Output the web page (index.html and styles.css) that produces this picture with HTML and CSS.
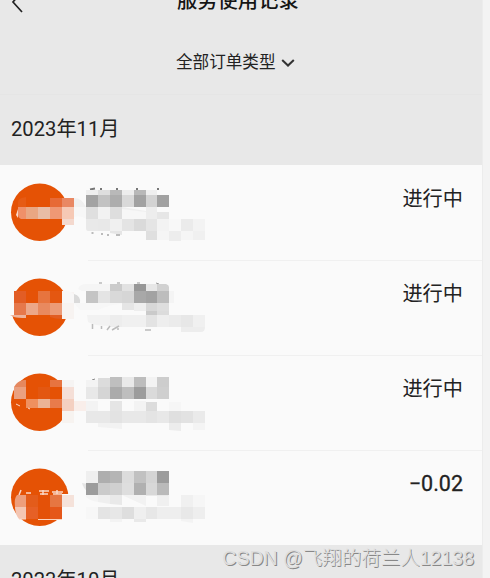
FILE: index.html
```html
<!DOCTYPE html>
<html lang="zh-CN">
<head>
<meta charset="utf-8">
<title>服务使用记录</title>
<link rel="stylesheet" href="styles.css">
</head>
<body>
<main class="screen">
  <header class="header">
    <svg class="back" width="14" height="24" viewBox="0 0 14 24"><path d="M10.5 3 2 13l9 10" /></svg>
    <h1 class="title">服务使用记录</h1>
  </header>
  <div class="filter">
    <span>全部订单类型</span>
    <svg class="chevron" width="14" height="10" viewBox="0 0 14 10"><path d="m1.2 2 5.800 5.500 5.800-5.500" /></svg>
  </div>
  <h2 class="month">2023年11月</h2>
  <ul class="records">
    <li class="record">
      <svg class="summary" width="220" height="90" viewBox="0 0 220 90">
        <circle cx="39.7" cy="42.2" r="28.7" fill="#e55205"/>
        <path d="M18 37v-5q0-4 8-5v10z" fill="#e65b14"/><path d="M16 45l2-6v9z" fill="#fbd9c9"/>
        <path d="M18 37h8v12h-5q-3-1-3-5z" fill="#ef9069"/>
        <path d="M26 37h12v12H26z" fill="#e9a783"/><path d="M38 37h12v12H38z" fill="#e8bda6"/>
        <path d="M50 28h12v9H50z" fill="#e76a36"/><path d="M50 37h12v12H50z" fill="#ef9875"/>
        <path d="M62 28h12v9H62z" fill="#e98863"/><path d="M62 37h12v12H62z" fill="#f6c9b5"/><path d="M62 49h12v6H62z" fill="#f4d9ce"/>
        <path d="M74 28q8 0 12 9H74z" fill="#f0f0f0"/><path d="M74 37h12v12q-5-4-12-2z" fill="#f7f7f7"/>
        <path d="M90 19.5l5-1M100 19h2M116 19h2M136 19h2M157 19h2" stroke="#777" stroke-width="1.800"/>
        <path d="M86 20h12v5H86z" fill="#efefef"/><path d="M98 20h12v5H98z" fill="#dedede"/><path d="M110 20h12v5h-12z" fill="#b9b9b9"/><path d="M122 20h12v5h-12z" fill="#ededed"/><path d="M134 20h12v5h-12z" fill="#b8b8b8"/><path d="M146 20h11v5h-11z" fill="#efefef"/>
        <path d="M86 25h12v12H86z" fill="#a3a3a3"/><path d="M98 25h12v12H98z" fill="#c2c2c2"/><path d="M110 25h12v12h-12z" fill="#adadad"/><path d="M122 25h12v12h-12z" fill="#d9d9d9"/><path d="M134 25h12v12h-12z" fill="#a2a2a2"/><path d="M146 25h11v12h-11z" fill="#d3d3d3"/><path d="M157 25h12v12h-12z" fill="#a1a1a1"/>
        <path d="M86 37h12v12H86z" fill="#dfdfdf"/><path d="M98 37h12v12H98z" fill="#f2f2f2"/><path d="M110 37h12v12h-12z" fill="#dedede"/><path d="M122 37l24 5v7h-24z" fill="#f7f7f7"/><path d="M122 37l24 4v1l-24-3z" fill="#efefef"/><path d="M146 37h11v12h-11z" fill="#ededed"/><path d="M157 42h12v7h-12z" fill="#e6e6e6"/>
        <path d="M86 49h12v12h-10q-2 0-2-3z" fill="#e9e9e9"/><path d="M98 49h12v12H98z" fill="#e8e8e8"/><path d="M110 49h12v12h-12z" fill="#f0f0f0"/><path d="M122 49h12v12h-12z" fill="#e4e4e4"/><path d="M134 49h12v12h-12z" fill="#dadada"/><path d="M146 49h11v12h-11z" fill="#e5e5e5"/><path d="M157 49h12v12h-12zM193 49h12v12h-12z" fill="#f3f3f3"/><path d="M169 49h12v12h-12z" fill="#f8f8f8"/><path d="M181 49h12v12h-12z" fill="#ebebeb"/>
        <path d="M110 61h12v4l-12-2z" fill="#e5e5e5"/><path d="M146 61h11v9h-11z" fill="#dfdfdf"/><path d="M157 61h12v9h-12zM181 61h12v9h-12z" fill="#f5f5f5"/><path d="M169 61h12v10h-12z" fill="#ededed"/><path d="M193 61h12v9h-12z" fill="#f0f0f0"/>
        <path d="M91.500 63h2M101 64h2M107 65h2M116 65h4" stroke="#bbb" stroke-width="1.800"/>
      </svg>
      <span class="status">进行中</span>
    </li>
    <li class="record">
      <svg class="summary" width="220" height="90" viewBox="0 0 220 90">
        <circle cx="39.7" cy="42.2" r="28.7" fill="#e55205"/>
        <path d="M62 27h12v27H62z" fill="#f7f3f1"/><path d="M0 26h14v24H0z" fill="#fafafa"/>
        <path d="M14 26h12v12H14z" fill="#e25d25"/><path d="M26 26h12v12H26z" fill="#e55208"/><path d="M38 26h12v12H38z" fill="#e7743e"/><path d="M50 26h12v12H50z" fill="#e45711"/>
        <path d="M14 38h12v12H14z" fill="#e6784b"/><path d="M26 38h12v12H26z" fill="#eca789"/><path d="M38 38h12v12H38z" fill="#e8895f"/><path d="M50 38h12v12H50z" fill="#ec9b77"/>
        <path d="M10 50h16v3q-8 0-12-1z" fill="#eeb39c"/><path d="M50 50h12v4q-7 0-12-2z" fill="#e25d22"/>
        <path d="M74 29q7 2 6 9h-6z" fill="#dadada"/><path d="M62 26q9-1 12 4v8H62z" fill="#f8f7f7"/>
        <path d="M78 24q2-5 8-5h24v7H82z" fill="#f5f5f5"/><path d="M99 18h3M117 18h3M137 18h3M156 18l3 1" stroke="#999" stroke-width="1"/>
        <path d="M110 19h12v7h-12z" fill="#cbcbcb"/><path d="M122 19h12v7h-12z" fill="#e2e2e2"/><path d="M134 19h12v7h-12z" fill="#979797"/><path d="M146 19h11v7h-11z" fill="#e7e7e7"/><path d="M157 19h9q3 1 3 3v4h-12z" fill="#d1d1d1"/>
        <path d="M86 26h12v12H86z" fill="#c4c4c4"/><path d="M98 26h12v12H98z" fill="#e4e4e4"/><path d="M110 26h12v12h-12z" fill="#d9d9d9"/><path d="M122 26h12v12h-12z" fill="#d6d6d6"/><path d="M134 26h12v12h-12z" fill="#a8a8a8"/><path d="M146 26h11v12h-11z" fill="#a2a2a2"/><path d="M157 26h12v12h-12z" fill="#bdbdbd"/><path d="M169 26h5v12h-5z" fill="#f4f4f4"/>
        <path d="M74 38h48v1q-12 0-24 6H80z" fill="#f7f7f7"/><path d="M122 38h12v7h-12z" fill="#e5e5e5"/><path d="M134 38h12v8h-12z" fill="#eee"/><path d="M146 38h11v8h-11z" fill="#d7d7d7"/><path d="M157 38h12v8h-12z" fill="#dedede"/><path d="M146 46h11v4h-11z" fill="#cacaca"/><path d="M157 46h12v4h-12z" fill="#dcdcdc"/>
        <path d="M87 50h23v11q-16 0-22-4z" fill="#f2f2f2"/><path d="M110 50h12v12h-12z" fill="#ededed"/><path d="M122 50h24v12h-24z" fill="#f0f0f0"/><path d="M146 50h11v12h-11z" fill="#e3e3e3"/><path d="M157 50h12v12h-12z" fill="#eee"/><path d="M169 50h12v12h-12z" fill="#ebebeb"/><path d="M181 50h12v12h-12z" fill="#e7e7e7"/><path d="M193 50h12v12h-12z" fill="#f0f0f0"/><path d="M181 62h24q0 5-4 5h-20z" fill="#ededed"/>
        <path d="M92.500 59v5M101.500 61v3M107 65l3-4M112 65l7-4M118 61v4M145 65h6" fill="none" stroke="#bbb" stroke-width="1.500"/>
      </svg>
      <span class="status">进行中</span>
    </li>
    <li class="record">
      <svg class="summary" width="220" height="90" viewBox="0 0 220 90">
        <circle cx="39.7" cy="42.2" r="28.7" fill="#e55205"/>
        <path d="M62 16h12v47H62z" fill="#fafafa"/>
        <path d="M14 27q3-6 10-7h2v7z" fill="#e5885f"/><path d="M14 27h12v12H14z" fill="#eaa080"/><path d="M38 27h12v12H38z" fill="#e35711"/><path d="M50 20h12v7H50z" fill="#e77440"/>
        <path d="M26 39h12v9H26z" fill="#ef905f"/><path d="M38 39h12v9H38z" fill="#ebb395"/><path d="M50 39h12v9H50z" fill="#e87b4b"/><path d="M62 27h12v12H62z" fill="#f5dfd7"/><path d="M62 39h12v12H62z" fill="#f4d0c1"/><path d="M74 41h12v10H74z" fill="#f9eeea"/><path d="M62 20h12v7H62z" fill="#f6f4f3"/><path d="M62 51h12v12H62z" fill="#f7f3f0"/>
        <path d="M16 44l4 2M28 48l2 1" stroke="#fbd9c9" stroke-width="1"/>
        <path d="M92 20l3-1" stroke="#888"/>
        <path d="M86 20h12v7H86z" fill="#f3f3f3"/><path d="M98 18h12v9H98z" fill="#dcdcdc"/><path d="M110 17h12v10h-12z" fill="#bfbfbf"/><path d="M122 17h12v10h-12z" fill="#e9e9e9"/><path d="M134 17h12v10h-12z" fill="#bdbdbd"/><path d="M146 17h11v10h-11z" fill="#f3f3f3"/><path d="M157 17h12v10h-12z" fill="#cdcdcd"/>
        <path d="M86 27h12v12H86z" fill="#e8e8e8"/><path d="M98 27h12v12H98z" fill="#d5d5d5"/><path d="M110 27h12v12h-12z" fill="#ababab"/><path d="M122 27h12v12h-12z" fill="#bebebe"/><path d="M134 27h12v12h-12z" fill="#9c9c9c"/><path d="M146 27h11v12h-11z" fill="#dadada"/><path d="M157 27h12v12h-12z" fill="#cfcfcf"/>
        <path d="M86 41h12v10H86zM134 41h12v10h-12z" fill="#f3f3f3"/><path d="M110 41h12v10h-12z" fill="#e5e5e5"/><path d="M146 42h11v9h-11z" fill="#dcdcdc"/><path d="M169 42h12v9h-12z" fill="#f6f6f6"/>
        <path d="M86 51h24v12H86zM122 51h24v12h-24zM157 51h12v12h-12z" fill="#e8e8e8"/><path d="M110 51h12v12h-12z" fill="#e3e3e3"/><path d="M146 51h11v12h-11z" fill="#e4e4e4"/><path d="M169 51h12v12h-12z" fill="#dfdfdf"/><path d="M181 51h12v12h-12z" fill="#e2e2e2"/><path d="M193 51h12v12h-12z" fill="#eaeaea"/>
        <path d="M98 63h24v6l-24-2z" fill="#f2f2f2"/><path d="M169 63h12v8l-12-1z" fill="#ececec"/><path d="M193 63h12v7h-12z" fill="#f4f4f4"/>
      </svg>
      <span class="status">进行中</span>
    </li>
    <li class="record">
      <svg class="summary" width="220" height="90" viewBox="0 0 220 90">
        <circle cx="39.7" cy="42.2" r="28.7" fill="#e55205"/>
        <path d="M19 40l2-5M26 38h5M39 36h10M40 39h8M43 35v5M52 37h11M57 35v4M53 39h9" stroke="#f9d8c8" stroke-width="1.500" fill="none"/>
        <path d="M62 39h12v25H62z" fill="#fafafa"/>
        <path d="M17 40h9v12H15q-1-9 2-12z" fill="#ed9e7c"/><path d="M26 40h12v12H26z" fill="#e35c1b"/><path d="M38 40h12v24H38z" fill="#e45108"/><path d="M50 40h12v12H50z" fill="#e67642"/><path d="M62 40h12v12H62z" fill="#f5e2da"/>
        <path d="M15 52h11v12h-7q-4-5-4-12z" fill="#f4c6b3"/><path d="M26 52h12v12H26z" fill="#e66026"/><path d="M50 52h12v12H50z" fill="#e5571a"/><path d="M19 64h7M38 64.500h24" stroke="#fbd3be"/>
        <path d="M82 28l6 1v8q-5-4-6-9z" fill="#e5e5e5"/>
        <path d="M86 16h12v12H86z" fill="#efefef"/><path d="M98 16h12v12H98z" fill="#aeaeae"/><path d="M110 16h12v12h-12z" fill="#b5b5b5"/><path d="M122 16h12v12h-12z" fill="#dcdcdc"/><path d="M134 16h12v12h-12z" fill="#c1c1c1"/><path d="M146 16h11v12h-11z" fill="#d4d4d4"/><path d="M157 16h12v12h-12z" fill="#9c9c9c"/>
        <path d="M86 28h12v12H86z" fill="#9c9c9c"/><path d="M98 28h12v12H98z" fill="#cbcbcb"/><path d="M110 28h12v12h-12z" fill="#d0d0d0"/><path d="M122 28h12v12h-12z" fill="#dedede"/><path d="M134 28h12v12h-12z" fill="#b0b0b0"/><path d="M146 28h11v12h-11z" fill="#d8d8d8"/><path d="M157 28h12v12h-12z" fill="#bababa"/>
        <path d="M86 40h12v7q-8-1-12-5z" fill="#f4f4f4"/><path d="M98 40h12v9l-12-2z" fill="#efefef"/><path d="M110 40h12v10l-12-1z" fill="#e9e9e9"/><path d="M122 40h24v11z" fill="#f2f2f2"/><path d="M157 40h12v11h-12zM181 40h12v12h-12z" fill="#f0f0f0"/><path d="M193 40h12v12h-12z" fill="#f6f6f6"/><path d="M146 40h22v1h-22z" fill="#e9e9e9"/>
        <path d="M86 52h12v12H86z" fill="#f7f7f7"/><path d="M98 52h12v12H98z" fill="#e4e4e4"/><path d="M110 52h12v12h-12zM146 52h11v12h-11z" fill="#e7e7e7"/><path d="M122 52h12v12h-12z" fill="#dedede"/><path d="M134 52h12v12h-12z" fill="#efefef"/><path d="M157 52h24v12h-24zM193 52h12v12h-12z" fill="#eee"/><path d="M181 52h12v12h-12z" fill="#e8e8e8"/>
        <path d="M110 64h12v3h-12zM181 64h12v4l-12-2z" fill="#f3f3f3"/><path d="M134 64h12v3h-12z" fill="#e9e9e9"/>
      </svg>
      <span class="amount">−0.02</span>
    </li>
  </ul>
  <h2 class="month month-next">2023年10月</h2>
</main>
<div class="watermark">CSDN @飞翔的荷兰人12138</div>
</body>
</html>
```

FILE: styles.css
```css
* { box-sizing: border-box; }

body {
  margin: 0;
  height: 578px;
  overflow: hidden;
  background: #f3f3f3;
  color: #222;
  font-family: Roboto, "Noto Sans CJK SC", sans-serif;
}

.screen {
  width: 483px;
  height: 578px;
  overflow: hidden;
  background: #e8e8e8;
  border-right: 1px solid #ececec;
}

.header {
  display: flex;
  align-items: flex-start;
  height: 34px;
  padding-left: 11px;
}

.back {
  margin-top: -11px;
  fill: none;
  stroke: #222;
  stroke-width: 1.7;
}

.title {
  margin: -13px 0 0 152px;
  font-size: 20.3px;
  line-height: 29px;
  font-weight: 500;
  color: #151515;
}

.filter {
  display: flex;
  align-items: center;
  gap: 5px;
  height: 61px;
  padding: 0 0 6px 176px;
  font-size: 16.6px;
  border-bottom: 1px solid #e5e5e5;
}

.chevron {
  margin-top: 3px;
  fill: none;
  stroke: #333;
  stroke-width: 2;
}

.month {
  height: 70px;
  margin: 0;
  padding-left: 11px;
  font-size: 20.2px;
  line-height: 68px;
  font-weight: 400;
}

.month-next {
  line-height: 71px;
}

.records {
  margin: 0;
  padding: 0;
  list-style: none;
  background: #fafafa;
}

.record {
  position: relative;
  display: flex;
  justify-content: space-between;
  height: 95px;
  padding: 5px 19px 0 0;
}

.record + .record::before {
  content: "";
  position: absolute;
  top: 0;
  left: 88px;
  right: 0;
  height: 1px;
  background: #f0f0f0;
}

.summary { flex: none; }

.status,
.amount {
  margin-top: 14px;
  font-size: 20.2px;
  line-height: 30px;
}

.amount {
  font-size: 21.5px;
  -webkit-text-stroke: 0.3px #222;
}

.watermark {
  position: absolute;
  right: 16px;
  bottom: 6px;
  font-family: "Liberation Sans", "Noto Sans CJK SC", sans-serif;
  font-weight: 300;
  font-size: 19.5px;
  line-height: 28px;
  white-space: nowrap;
  color: #dedede;
  text-shadow: 1px 1px 0 #888;
}
```
